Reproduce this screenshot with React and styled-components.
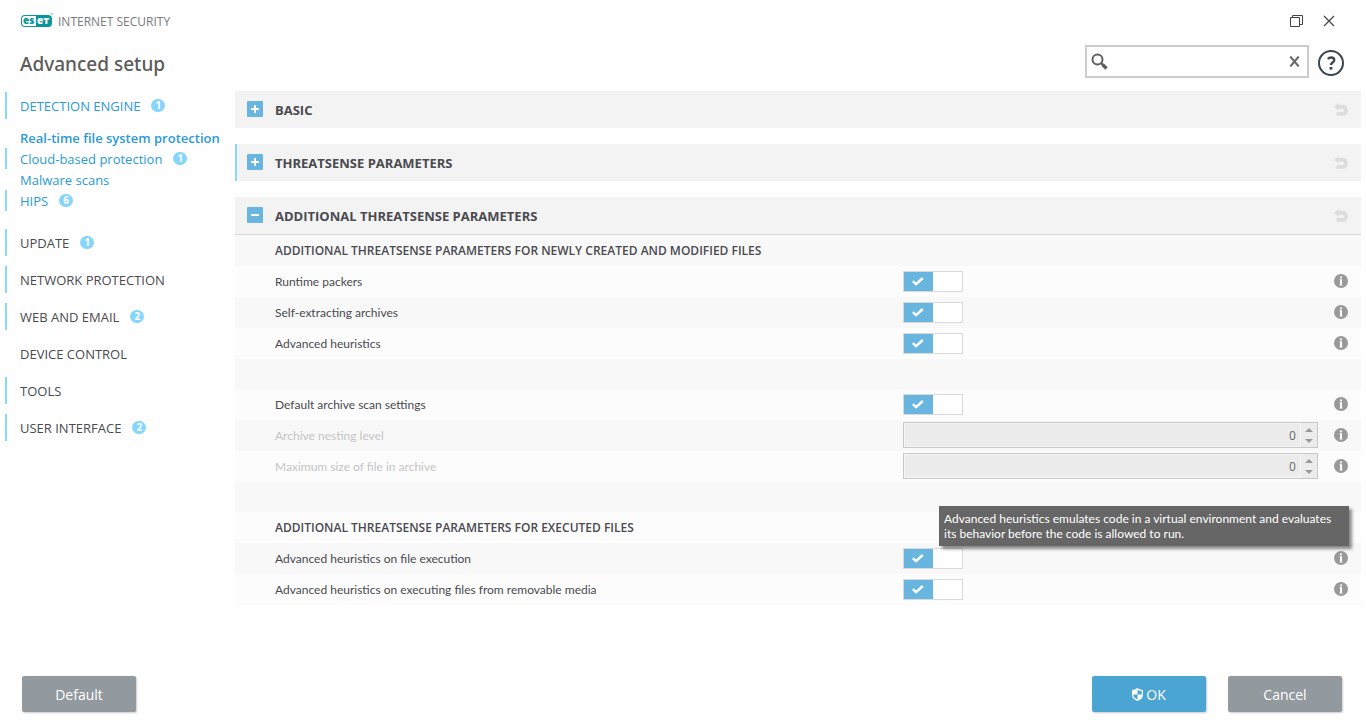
import React, { useState } from 'react';
import styled, { createGlobalStyle, css } from 'styled-components';

const GlobalStyle = createGlobalStyle`
  * {
    box-sizing: border-box;
  }

  body {
    margin: 0;
    background: #fefefe;
    color: #4a4a50;
    font-family: 'Open Sans', 'Noto Sans', sans-serif;
    font-size: 12px;
  }

  button,
  input {
    font-family: inherit;
  }
`;

const Window = styled.div`
  display: flex;
  flex-direction: column;
  min-height: 100vh;
`;

const TitleBar = styled.header`
  display: flex;
  align-items: center;
  justify-content: space-between;
  height: 42px;
  padding: 0 31px 0 20px;
`;

const Brand = styled.div`
  display: flex;
  align-items: center;
  gap: 5px;
  color: #777b80;
  font-size: 12px;
`;

const WindowButtons = styled.div`
  display: flex;
  gap: 20px;
`;

const IconButton = styled.button`
  display: flex;
  align-items: center;
  justify-content: center;
  flex-shrink: 0;
  padding: 0;
  border: none;
  background: none;
  color: ${({ $color }) => $color || '#444'};
  cursor: pointer;
`;

const HeadingRow = styled.div`
  display: flex;
  align-items: center;
  padding: 3px 21px 13px 20px;
`;

const Title = styled.h1`
  flex: 1;
  margin: 0;
  padding-top: 4px;
  color: #5b5b5b;
  font-family: 'Noto Sans', sans-serif;
  font-size: 19px;
  font-weight: 500;
  line-height: 28px;
`;

const SearchBox = styled.div`
  display: flex;
  align-items: center;
  width: 224px;
  height: 33px;
  margin-right: 8px;
  padding: 0 7px 0 4px;
  border: 2px solid #ccc;
  background: #fff;
`;

const SearchInput = styled.input`
  flex: 1;
  min-width: 0;
  border: none;
  outline: none;
  background: transparent;
  font-size: 13px;
`;

const Body = styled.div`
  display: flex;
  flex: 1;
`;

const Sidebar = styled.nav`
  display: flex;
  flex-direction: column;
  gap: 10px;
  flex: 0 0 230px;
  margin-left: 5px;
  padding-top: 1px;
`;

const SubList = styled.div`
  display: flex;
  flex-direction: column;
  margin: -2px 0 8px;
`;

const NavLink = styled.a`
  display: flex;
  align-items: center;
  gap: 11px;
  height: ${({ $sub }) => ($sub ? 21 : 27)}px;
  padding-left: 13px;
  border-left: 2px solid ${({ $marked }) => ($marked ? '#8ad6fd' : 'transparent')};
  color: ${({ $active }) => ($active ? '#2b9ad6' : '#4a4a50')};
  font-size: 13px;
  font-weight: ${({ $current }) => ($current ? 600 : 400)};
  text-decoration: none;
  white-space: nowrap;
`;

const Badge = styled.span`
  width: 14px;
  height: 13px;
  border-radius: 7px;
  background: #86d5fc;
  color: #fff;
  font-size: 10px;
  font-weight: 700;
  line-height: 13px;
  text-align: center;
`;

const Content = styled.main`
  display: flex;
  flex-direction: column;
  gap: 16px;
  flex: 1;
  min-width: 0;
  margin-right: 5px;
`;

const PanelHead = styled.div`
  display: flex;
  align-items: center;
  gap: 12px;
  height: 37px;
  padding: 0 13px 0 10px;
  border-left: 2px solid ${({ $marked }) => ($marked ? '#8ad6fd' : '#f3f3f3')};
  background: #f3f3f3;
`;

const PanelTitle = styled.h2`
  flex: 1;
  margin: 0;
  font-size: 13px;
  font-weight: 700;
`;

const Expander = styled(IconButton)`
  width: 16px;
  height: 16px;
  margin-bottom: 1px;
  border-radius: 1px;
  background: #68b5df;
  color: #fff;
`;

const RevertButton = styled(IconButton)`
  margin-bottom: 1px;
`;

const Rows = styled.div`
  border-top: 1px solid #d9d9d9;
`;

const rowBase = css`
  padding-left: 40px;

  &:nth-child(odd) {
    background: #f8f8f8;
  }

  &:nth-child(even) {
    background: #fcfcfc;
  }
`;

const Row = styled.div`
  ${rowBase}
  position: relative;
  display: grid;
  grid-template-columns: 3fr 2fr 40px;
  align-items: center;
  height: 31px;
`;

const GroupTitle = styled.h3`
  ${rowBase}
  margin: 0;
  font-size: 12px;
  font-weight: 600;
  line-height: 31px;
`;

const Spacer = styled.div`
  ${rowBase}
  height: 30px;
`;

const RowLabel = styled.label`
  color: ${({ $disabled }) => ($disabled ? '#c4c4c4' : '#4a4a50')};
  font-family: Lato, sans-serif;
`;

const InfoButton = styled(IconButton)`
  align-items: flex-start;
  justify-self: end;
  height: 15px;
  margin-right: 13px;
`;

const Switch = styled.span`
  display: grid;
  width: 60px;
  height: 21px;

  svg {
    grid-area: 1 / 1;
    align-self: center;
    margin-left: 9px;
    pointer-events: none;
  }
`;

const SwitchInput = styled.input`
  grid-area: 1 / 1;
  margin: 0;
  appearance: none;
  border: 1px solid #d9d9d9;
  background: linear-gradient(to right, #68b5df 29px, #fff 29px);
  cursor: pointer;

  &:not(:checked) {
    background: #fff;
  }
`;

const Spinner = styled.div`
  display: flex;
  height: 26px;
  margin: 0 3px 1px 0;
  border: 1px solid #c8c8c8;
  background: #ececec;
`;

const NumberInput = styled.input`
  flex: 1;
  min-width: 0;
  padding: 0 4px 0 0;
  border: 1px solid #f5f5f5;
  background: #ececec;
  color: #6a6a6a;
  font-size: 12px;
  text-align: right;
  appearance: textfield;

  &::-webkit-inner-spin-button {
    appearance: none;
    margin: 0;
  }
`;

const Steps = styled.div`
  display: flex;
  flex-direction: column;
  justify-content: center;
  gap: 7px;
  width: 16px;
`;

const Tooltip = styled.div`
  position: absolute;
  right: 12px;
  bottom: 28px;
  z-index: 1;
  width: 410px;
  padding: 5px;
  background: #666;
  box-shadow: 3px 3px 3px rgba(0, 0, 0, 0.45);
  color: #fff;
  font-family: Lato, sans-serif;
  font-size: 12px;
  line-height: 15px;
`;

const Footer = styled.footer`
  display: flex;
  gap: 22px;
  padding: 16px 24px 16px 22px;
`;

const Button = styled.button`
  display: flex;
  align-items: center;
  justify-content: center;
  gap: 3px;
  width: 114px;
  height: 36px;
  margin-right: ${({ $pushed }) => ($pushed ? 'auto' : '0')};
  padding: 0;
  border: none;
  border-radius: 2px;
  background: ${({ $primary }) => ($primary ? '#4ba5d3' : '#92999f')};
  box-shadow: 1px 1px 2px rgba(0, 0, 0, 0.2);
  color: #fff;
  font-size: 14px;
  cursor: pointer;
`;

const NAV = [
  {
    label: 'DETECTION ENGINE',
    count: 1,
    marked: true,
    active: true,
    children: [
      { label: 'Real-time file system protection', current: true },
      { label: 'Cloud-based protection', count: 1, marked: true },
      { label: 'Malware scans' },
      { label: 'HIPS', count: 6, marked: true },
    ],
  },
  { label: 'UPDATE', count: 1, marked: true },
  { label: 'NETWORK PROTECTION', marked: true },
  { label: 'WEB AND EMAIL', count: 2, marked: true },
  { label: 'DEVICE CONTROL' },
  { label: 'TOOLS', marked: true },
  { label: 'USER INTERFACE', count: 2, marked: true },
];

const EsetLogo = () => (
  <svg width="33" height="16" viewBox="0 0 33 16" role="img" aria-label="eset">
    <rect x="1" y="2" width="31" height="12" rx="4" fill="#0a959b" />
    <path d="M5 3h11v10H5a3 3 0 0 1-3-3V6a3 3 0 0 1 3-3z" fill="#fff" />
    <text x="3" y="11" fontSize="10" fontWeight="800" fill="#0a959b">es</text>
    <text x="17" y="11" fontSize="10" fontWeight="800" fill="#fff">eт</text>
    <circle cx="32" cy="1" r="1" fill="#8bcbd0" />
  </svg>
);

const UndoIcon = () => (
  <svg width="14" height="13" viewBox="0 0 14 13">
    <path d="M4.500 0v1.800H9a4.800 4.800 0 0 1 4.800 4.700v1.600A4.800 4.800 0 0 1 9 12.800H2.500V9H8.500a1.500 1.500 0 0 0 1.500-1.500v-.3a1.500 1.500 0 0 0-1.500-1.500h-4v2.300L0.200 4z" fill="#ddd" />
  </svg>
);

const InfoIcon = () => (
  <svg width="14" height="14" viewBox="0 0 14 14">
    <circle cx="7" cy="7" r="7" fill="#999" />
    <path d="M6 2.500h2v1.700H6zM5.500 5.300H8v5.500h.5v.7h-3v-.7H6V6h-.5z" fill="#fff" />
  </svg>
);

const Toggle = ({ id }) => {
  const [on, setOn] = useState(true);

  return (
    <Switch>
      <SwitchInput id={id} type="checkbox" checked={on} onChange={() => setOn(!on)} />
      {on && (
        <svg width="12" height="9" viewBox="0 0 12 9">
          <path d="M.8 4.200l3.300 3L10.800 1" fill="none" stroke="#fff" strokeWidth="2.400" />
        </svg>
      )}
    </Switch>
  );
};

const NumberField = ({ id }) => (
  <Spinner>
    <NumberInput id={id} type="number" defaultValue={0} disabled />
    <Steps>
      <IconButton aria-label="Increase" $color="#999" disabled>
        <svg width="8" height="4" viewBox="0 0 8 4"><path d="M0 4l4-4 4 4z" fill="currentColor" /></svg>
      </IconButton>
      <IconButton aria-label="Decrease" $color="#999" disabled>
        <svg width="8" height="4" viewBox="0 0 8 4"><path d="M0 0l4 4 4-4z" fill="currentColor" /></svg>
      </IconButton>
    </Steps>
  </Spinner>
);

const SettingRow = ({ id, label, number, tooltip }) => (
  <Row>
    <RowLabel htmlFor={id} $disabled={number}>{label}</RowLabel>
    {number ? <NumberField id={id} /> : <Toggle id={id} />}
    <InfoButton aria-label={`About ${label}`}>
      <InfoIcon />
    </InfoButton>
    {tooltip && <Tooltip role="tooltip">{tooltip}</Tooltip>}
  </Row>
);

const Panel = ({ title, marked, open, children }) => (
  <section>
    <PanelHead $marked={marked}>
      <Expander aria-label={title} aria-expanded={!!open}>
        <svg width="8" height="8" viewBox="0 0 8 8">
          <path d={open ? 'M0 3h8v2H0z' : 'M0 3h3V0h2v3h3v2H5v3H3V5H0z'} fill="currentColor" />
        </svg>
      </Expander>
      <PanelTitle>{title}</PanelTitle>
      <RevertButton aria-label="Revert">
        <UndoIcon />
      </RevertButton>
    </PanelHead>
    {open && <Rows>{children}</Rows>}
  </section>
);

const NavItem = ({ item, sub, active }) => (
  <NavLink href="#" $sub={sub} $marked={item.marked} $active={active} $current={item.current}>
    {item.label}
    {item.count && <Badge>{item.count}</Badge>}
  </NavLink>
);

const App = () => {
  const [query, setQuery] = useState('');

  return (
    <Window>
      <GlobalStyle />
      <TitleBar>
        <Brand>
          <EsetLogo />
          INTERNET SECURITY
        </Brand>
        <WindowButtons>
          <IconButton aria-label="Restore">
            <svg width="13" height="12" viewBox="0 0 13 12" fill="none" stroke="currentColor">
              <path d="M.5 2.500h9v9h-9zM2.500 2.500v-2h10v9h-3" />
            </svg>
          </IconButton>
          <IconButton aria-label="Close">
            <svg width="12" height="12" viewBox="0 0 12 12" fill="none" stroke="currentColor" strokeWidth="1.200">
              <path d="M1 1l10 10M11 1L1 11" />
            </svg>
          </IconButton>
        </WindowButtons>
      </TitleBar>

      <HeadingRow>
        <Title>Advanced setup</Title>
        <SearchBox>
          <svg width="17" height="17" viewBox="0 0 17 17" fill="none" stroke="#5f5f5f">
            <circle cx="6.500" cy="6.500" r="5" strokeWidth="2" />
            <path d="M10 10l2 2" strokeWidth="2" />
            <path d="M11.500 11.500l4 4" strokeWidth="3.400" />
          </svg>
          <SearchInput
            type="text"
            aria-label="Search"
            value={query}
            onChange={(e) => setQuery(e.target.value)}
          />
          <IconButton aria-label="Clear" $color="#666" onClick={() => setQuery('')}>
            <svg width="11" height="11" viewBox="0 0 11 11" fill="none" stroke="currentColor" strokeWidth="2">
              <path d="M1.300.5l8.400 10M9.700.5l-8.400 10" />
            </svg>
          </IconButton>
        </SearchBox>
        <IconButton aria-label="Help" $color="#3d4752">
          <svg width="28" height="30" viewBox="0 -2 28 30" fill="none" stroke="currentColor">
            <circle cx="14" cy="14" r="12" strokeWidth="2" />
            <path d="M10.800 10q1.400-1.500 3.400-1.500 3 0 3 2.400 0 1.400-1.600 2.500-1.600 1-1.600 2.600" strokeWidth="2.400" />
            <path d="M14 18v2.600" strokeWidth="2.800" />
          </svg>
        </IconButton>
      </HeadingRow>

      <Body>
        <Sidebar>
          {NAV.map((item) => (
            <React.Fragment key={item.label}>
              <NavItem item={item} active={item.active} />
              {item.children && (
                <SubList>
                  {item.children.map((child) => (
                    <NavItem key={child.label} item={child} sub active />
                  ))}
                </SubList>
              )}
            </React.Fragment>
          ))}
        </Sidebar>

        <Content>
          <Panel title="BASIC" />
          <Panel title="THREATSENSE PARAMETERS" marked />
          <Panel title="ADDITIONAL THREATSENSE PARAMETERS" open>
            <GroupTitle>ADDITIONAL THREATSENSE PARAMETERS FOR NEWLY CREATED AND MODIFIED FILES</GroupTitle>
            <SettingRow id="packers" label="Runtime packers" />
            <SettingRow id="sfx" label="Self-extracting archives" />
            <SettingRow id="heuristics" label="Advanced heuristics" />
            <Spacer />
            <SettingRow id="archive" label="Default archive scan settings" />
            <SettingRow id="nesting" label="Archive nesting level" number />
            <SettingRow id="maxsize" label="Maximum size of file in archive" number />
            <Spacer />
            <GroupTitle>ADDITIONAL THREATSENSE PARAMETERS FOR EXECUTED FILES</GroupTitle>
            <SettingRow
              id="execution"
              label="Advanced heuristics on file execution"
              tooltip="Advanced heuristics emulates code in a virtual environment and evaluates its behavior before the code is allowed to run."
            />
            <SettingRow id="removable" label="Advanced heuristics on executing files from removable media" />
          </Panel>
        </Content>
      </Body>

      <Footer>
        <Button $pushed>Default</Button>
        <Button $primary>
          <svg width="11" height="13" viewBox="0 0 11 13">
            <path d="M5.500 0Q8 2 11 2v4.500Q11 11 5.500 13 0 11 0 6.500V2q3 0 5.500-2z" fill="#fff" />
            <path d="M5.500 6.500H1.300q0 3.400 4.200 5zM5.500 2v4.500h4.200V3q-2.200 0-4.200-1z" fill="#4ba5d3" />
          </svg>
          OK
        </Button>
        <Button>Cancel</Button>
      </Footer>
    </Window>
  );
};

export default App;
